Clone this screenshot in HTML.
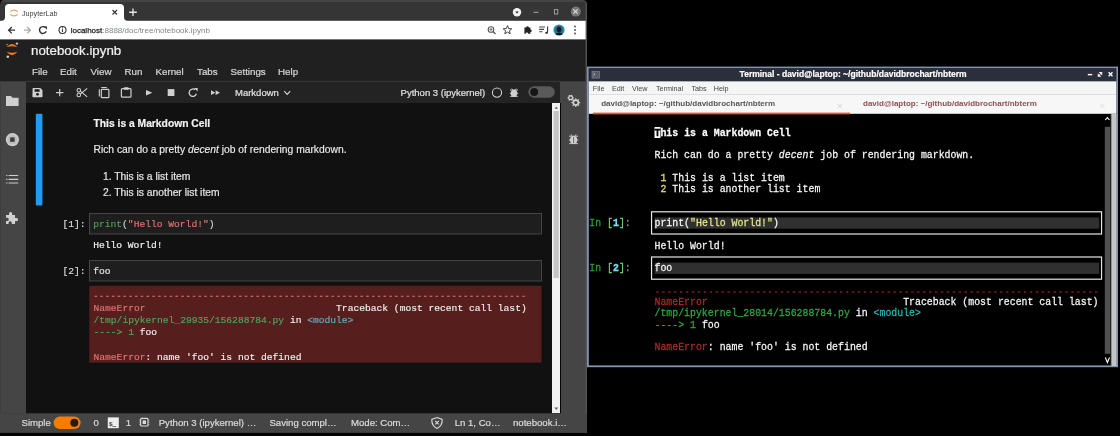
<!DOCTYPE html>
<html><head><meta charset="utf-8">
<style>
html,body{margin:0;padding:0;width:1120px;height:436px;overflow:hidden;background:#000}
svg{display:block;will-change:transform}
text{white-space:pre}
.S{font-family:"Liberation Sans",sans-serif}
.M{font-family:"Liberation Mono",monospace}
</style></head><body>
<svg width="1120" height="436" viewBox="0 0 1120 436">
<g id="browser">
<clipPath id="bwclip"><path d="M0,5 Q0,0 5,0 H582 Q587,0 587,5 V432.8 H0 Z"/></clipPath>
<g clip-path="url(#bwclip)">
<rect x="0" y="0" width="587" height="433" fill="#353535"/>
<rect x="0" y="0" width="587" height="2" fill="#454545"/>
<path d="M1,21 Q5,21 5,17 L5,8 Q5,4 9,4 L120,4 Q124,4 124,8 L124,17 Q124,21 128,21 Z" fill="#ffffff"/>
<g transform="translate(14,13)"><path d="M-3.6,-1.2 A3.8,2.4 0 0 1 3.6,-1.2" stroke="#f0a060" stroke-width="1.2" fill="none"/><path d="M-3.6,1.2 A3.8,2.4 0 0 0 3.6,1.2" stroke="#f0a060" stroke-width="1.2" fill="none"/></g>
<text class="S" x="22" y="15.8" font-size="7.2" fill="#3c4043">JupyterLab</text>
<path d="M112.5,10 L117,14.5 M117,10 L112.5,14.5" stroke="#333" stroke-width="1.1"/>
<path d="M133,8.5 V16 M129.2,12.25 H136.8" stroke="#e8e8e8" stroke-width="1.3"/>
<circle cx="517" cy="12.2" r="4.2" fill="#f2f2f2"/><path d="M515.2,11.4 L518.8,11.4 L517,13.4 Z" fill="#222"/>
<ellipse cx="536" cy="12.3" rx="6.5" ry="2.2" fill="none" stroke="#444" stroke-width="0.6"/><path d="M533.6,12.3 H538.4" stroke="#bbb" stroke-width="0.9"/>
<rect x="554.4" y="9.6" width="3.4" height="4.4" fill="none" stroke="#aaa" stroke-width="0.9"/>
<circle cx="575.8" cy="11.6" r="5" fill="#777"/><path d="M573.3,9.3 L577.7,13.7 M577.7,9.3 L573.3,13.7" stroke="#e0e0e0" stroke-width="1.1"/>
<rect x="0" y="20.8" width="587" height="18.8" fill="#ffffff"/>
<path d="M15,30.2 H8.8 M11.8,27 L8.6,30.2 L11.8,33.4" stroke="#333" stroke-width="1.3" fill="none"/>
<path d="M24,30.2 H30.2 M27.2,27 L30.4,30.2 L27.2,33.4" stroke="#aaa" stroke-width="1.3" fill="none"/>
<path d="M46.1,31.2 A3.4,3.4 0 1 1 45.3,27.6" stroke="#333" stroke-width="1.4" fill="none"/><path d="M43.9,26.6 L47,26.6 L47,29.7 Z" fill="#333"/>
<circle cx="62.5" cy="30" r="3.5" stroke="#333" stroke-width="1.1" fill="none"/><path d="M62.5,29.2 V32" stroke="#333" stroke-width="1.1"/><circle cx="62.5" cy="27.9" r="0.6" fill="#333"/>
<text class="S" x="70.7" y="32.6" font-size="8" fill="#202124"><tspan fill="#202124" stroke="#202124" stroke-width="0.25">localhost</tspan><tspan fill="#80868b">:8888/doc/tree/notebook.ipynb</tspan></text>
<circle cx="491" cy="29.5" r="2.8" stroke="#555" stroke-width="1.1" fill="none"/><path d="M493,31.5 L495.5,34" stroke="#555" stroke-width="1.2"/><path d="M491,28 V31 M489.5,29.5 H492.5" stroke="#555" stroke-width="0.8"/>
<path d="M507.5,25.6 L508.7,28.6 L511.8,28.8 L509.4,30.8 L510.2,33.8 L507.5,32.1 L504.8,33.8 L505.6,30.8 L503.2,28.8 L506.3,28.6 Z" stroke="#444" stroke-width="1" fill="none"/>
<path d="M524.4,27.6 H526.2 A1.3,1.3 0 0 1 528.8,27.6 H530.4 V29.4 A1.3,1.3 0 0 1 530.4,32 V33.8 H528.2 A1.3,1.3 0 0 0 525.6,33.8 H524.4 Z" fill="#222"/>
<path d="M539.2,27 H545 M539.2,29.4 H544 M539.2,31.8 H542.6" stroke="#444" stroke-width="1.1"/><path d="M547.6,26.4 V32.6" stroke="#333" stroke-width="1.1"/><ellipse cx="546.6" cy="32.8" rx="1.4" ry="1.1" fill="#333"/>
<circle cx="559" cy="30" r="5.6" fill="#1a93c4"/><circle cx="559" cy="30" r="4.3" fill="#2e6e88"/><ellipse cx="559" cy="29.4" rx="2.3" ry="3" fill="#1a1a1a"/><path d="M555.2,34 Q559,31.6 562.8,34 Q559,36.6 555.2,34 Z" fill="#111"/>
<circle cx="575" cy="26.5" r="0.9" fill="#444"/><circle cx="575" cy="30" r="0.9" fill="#444"/><circle cx="575" cy="33.5" r="0.9" fill="#444"/>
<rect x="0" y="39.6" width="587" height="41.9" fill="#202020"/>
<path d="M6.6,47.3 Q12,40.6 17.4,47.3 Q12,45.4 6.6,47.3 Z" fill="#f37726"/><path d="M6.6,51.8 Q12,58.6 17.4,51.8 Q12,53.8 6.6,51.8 Z" fill="#f37726"/><circle cx="16.9" cy="43.6" r="1.2" fill="#bdbdbd"/><circle cx="7" cy="44.6" r="0.8" fill="#999"/><circle cx="7.8" cy="56.8" r="1.3" fill="#cfcfcf"/>
<text class="S" x="31" y="55.3" font-size="13.3" fill="#f2f2f2" stroke="#f2f2f2" stroke-width="0.2">notebook.ipynb</text>
<text class="S" x="32" y="75.2" font-size="9.75" fill="#d8d8d8" stroke="#d8d8d8" stroke-width="0.2">File</text>
<text class="S" x="60" y="75.2" font-size="9.75" fill="#d8d8d8" stroke="#d8d8d8" stroke-width="0.2">Edit</text>
<text class="S" x="90.5" y="75.2" font-size="9.75" fill="#d8d8d8" stroke="#d8d8d8" stroke-width="0.2">View</text>
<text class="S" x="124.5" y="75.2" font-size="9.75" fill="#d8d8d8" stroke="#d8d8d8" stroke-width="0.2">Run</text>
<text class="S" x="155.5" y="75.2" font-size="9.75" fill="#d8d8d8" stroke="#d8d8d8" stroke-width="0.2">Kernel</text>
<text class="S" x="197" y="75.2" font-size="9.75" fill="#d8d8d8" stroke="#d8d8d8" stroke-width="0.2">Tabs</text>
<text class="S" x="230.5" y="75.2" font-size="9.75" fill="#d8d8d8" stroke="#d8d8d8" stroke-width="0.2">Settings</text>
<text class="S" x="278" y="75.2" font-size="9.75" fill="#d8d8d8" stroke="#d8d8d8" stroke-width="0.2">Help</text>
<rect x="0" y="81.5" width="26" height="332" fill="#454545"/>
<rect x="0" y="81.5" width="1" height="352" fill="#3e3e3e"/>
<rect x="26" y="103" width="1" height="310.5" fill="#0a0a0a"/>
<path d="M6,96 H11 L12.5,97.8 H18.6 V105.9 H6 Z" fill="#cfcfcf"/>
<circle cx="12.4" cy="139.6" r="6.6" fill="#d0d0d0"/><circle cx="12.4" cy="139.6" r="5" fill="#bdbdbd"/><rect x="10.2" y="137.4" width="4.4" height="4.4" fill="#3a3a3a"/>
<path d="M8.6,175.5 H18.2 M8.6,179.3 H18.2 M8.6,183 H18.2" stroke="#cfcfcf" stroke-width="1.2"/><path d="M6.2,175.5 H7.4 M6.2,179.3 H7.4 M6.2,183 H7.4" stroke="#cfcfcf" stroke-width="1.2"/>
<path d="M6,215 H9 V213.5 A1.6,1.6 0 0 1 12.2,213.5 V215 H15 V218 H16.5 A1.6,1.6 0 0 1 16.5,221.2 H15 V224 H11.8 V222.8 A1.6,1.6 0 0 0 8.6,222.8 V224 H6 V221 H7.2 A1.6,1.6 0 0 0 7.2,217.8 H6 Z" fill="#cfcfcf"/>
<rect x="26" y="81.5" width="534" height="21.5" fill="#232323"/>
<rect x="26" y="80.8" width="534" height="1" fill="#3a3a3a"/>
<path d="M32.6,88.6 Q32.4,88.1 33.2,88.1 H40.3 L42.5,90.3 V96.5 Q42.5,97.2 41.8,97.2 H33.2 Q32.4,97.2 32.4,96.5 Z" fill="#d0d0d0"/><rect x="34.6" y="89.2" width="5" height="2.6" fill="#212121"/><circle cx="37.5" cy="94.3" r="1.4" fill="#212121"/>
<path d="M59.7,88.9 V96.2 M56,92.55 H63.4" stroke="#d0d0d0" stroke-width="1.2"/>
<circle cx="78.8" cy="90.3" r="1.8" stroke="#d0d0d0" stroke-width="1.1" fill="none"/><circle cx="78.8" cy="95" r="1.8" stroke="#d0d0d0" stroke-width="1.1" fill="none"/><path d="M80.4,91.2 L87.2,96.8 M80.4,94.1 L87.2,88.3" stroke="#d0d0d0" stroke-width="1.1"/>
<path d="M101.2,87.5 H106.8 M99.3,89.2 V96.5" stroke="#d0d0d0" stroke-width="1.1" fill="none"/><rect x="101.3" y="89.4" width="7.6" height="8.3" rx="0.8" stroke="#d0d0d0" stroke-width="1.2" fill="none"/>
<rect x="121.4" y="88.6" width="9.6" height="8.6" rx="1" stroke="#d0d0d0" stroke-width="1.2" fill="none"/><rect x="123.8" y="87.2" width="4.8" height="2.6" rx="0.6" fill="#d0d0d0"/>
<path d="M146,89.9 L152.3,92.75 L146,95.6 Z" fill="#d0d0d0"/>
<rect x="167.7" y="89.1" width="6.7" height="6.9" fill="#d0d0d0"/>
<path d="M196.4,93.8 A3.7,3.7 0 1 1 195.2,89.8" stroke="#d0d0d0" stroke-width="1.3" fill="none"/><path d="M194.2,88 L197.6,88 L197.6,91.4 Z" fill="#d0d0d0"/>
<path d="M211,90.3 L215.3,92.7 L211,95.1 Z M215.6,90.3 L219.9,92.7 L215.6,95.1 Z" fill="#d0d0d0"/>
<text class="S" x="235" y="95.6" font-size="9.5" fill="#e0e0e0" stroke="#e0e0e0" stroke-width="0.2">Markdown</text>
<path d="M284.2,91.2 L287.2,94.3 L290.2,91.2" stroke="#d0d0d0" stroke-width="1.2" fill="none"/>
<text class="S" x="400.6" y="96" font-size="9.5" fill="#e0e0e0" stroke="#e0e0e0" stroke-width="0.2">Python 3 (ipykernel)</text>
<circle cx="497" cy="92.6" r="4.6" stroke="#d0d0d0" stroke-width="1.1" fill="none"/>
<ellipse cx="514" cy="93.3" rx="3.3" ry="3.6" fill="#d0d0d0"/><path d="M510,90 L518,90 M509.8,93.3 H518.2 M510.2,96.4 L517.8,96.4 M511.8,88.6 L512.6,89.8 M516.2,88.6 L515.4,89.8" stroke="#d0d0d0" stroke-width="0.9"/>
<rect x="528.3" y="86.2" width="26.5" height="11.6" rx="5.8" fill="#5a5a5a"/><circle cx="534.2" cy="92" r="3.9" fill="#161616"/>
<rect x="26" y="103" width="526" height="310.5" fill="#111111"/>
<rect x="552" y="103" width="8.5" height="310" fill="#f1f1f1"/>
<rect x="553.6" y="111" width="5.2" height="167" fill="#c4c4c4"/>
<path d="M554.6,108.8 L556.3,106.6 L558,108.8 Z" fill="#606060"/>
<path d="M554.3,407.5 H558.3 L556.3,410 Z" fill="#666"/>
<rect x="560" y="81.5" width="27" height="352" fill="#454545"/>
<rect x="560" y="103" width="1" height="310.5" fill="#050505"/>
<rect x="585.6" y="0" width="1.4" height="433" fill="#555555"/>
<g fill="none" stroke="#d0d0d0"><circle cx="570.6" cy="97.8" r="1.9" stroke-width="1.2"/><circle cx="575.8" cy="102.6" r="2.5" stroke-width="1.6"/></g>
<g stroke="#d0d0d0" stroke-width="1.2"><path d="M578.20,102.60 L580.20,102.60"/><path d="M577.50,104.30 L578.91,105.71"/><path d="M575.80,105.00 L575.80,107.00"/><path d="M574.10,104.30 L572.69,105.71"/><path d="M573.40,102.60 L571.40,102.60"/><path d="M574.10,100.90 L572.69,99.49"/><path d="M575.80,100.20 L575.80,98.20"/><path d="M577.50,100.90 L578.91,99.49"/><path d="M572.30,97.80 L573.70,97.80"/><path d="M571.45,99.27 L572.15,100.48"/><path d="M569.75,99.27 L569.05,100.48"/><path d="M568.90,97.80 L567.50,97.80"/><path d="M569.75,96.33 L569.05,95.12"/><path d="M571.45,96.33 L572.15,95.12"/></g>
<ellipse cx="573.6" cy="140" rx="3.6" ry="4" fill="#d0d0d0"/><path d="M569,136.2 L578.2,136.2 M568.8,140 H578.4 M569.2,143.6 L578,143.6 M571.2,134.4 L572,135.8 M576,134.4 L575.2,135.8" stroke="#d0d0d0" stroke-width="0.9"/><path d="M573.6,137 V143" stroke="#454545" stroke-width="0.7"/>
<rect x="0" y="413.5" width="587" height="20" fill="#454545"/>
<text class="S" x="21.5" y="426.4" font-size="9.6" fill="#dcdcdc" stroke="#dcdcdc" stroke-width="0.2">Simple</text>
<rect x="53.6" y="416.6" width="27" height="12.4" rx="6.2" fill="#f57c00"/><circle cx="74.3" cy="422.8" r="4" fill="#2a1a0a"/>
<text class="S" x="93.5" y="426.4" font-size="9.6" fill="#dcdcdc" stroke="#dcdcdc" stroke-width="0.2">0</text>
<rect x="107.8" y="417.4" width="11" height="10.8" fill="#eeeeee"/><text stroke="#333" stroke-width="0.15" class="M" x="109" y="425.6" font-size="6" fill="#333">$_</text>
<text class="S" x="125.8" y="426.4" font-size="9.6" fill="#dcdcdc" stroke="#dcdcdc" stroke-width="0.2">1</text>
<rect x="140.6" y="418.4" width="7.4" height="7.6" rx="1" stroke="#dcdcdc" stroke-width="1.1" fill="none"/><rect x="142.6" y="420.4" width="3.4" height="3.6" fill="#dcdcdc"/><path d="M139.2,420 H140.4 M139.2,422.2 H140.4 M139.2,424.4 H140.4 M148.2,420 H149.4 M148.2,422.2 H149.4 M148.2,424.4 H149.4" stroke="#dcdcdc" stroke-width="0.7"/>
<text class="S" x="158.7" y="426.4" font-size="9.6" fill="#dcdcdc" stroke="#dcdcdc" stroke-width="0.2">Python 3 (ipykernel) …</text>
<text class="S" x="269.4" y="426.4" font-size="9.6" fill="#dcdcdc" stroke="#dcdcdc" stroke-width="0.2">Saving compl…</text>
<text class="S" x="351" y="426.4" font-size="9.6" fill="#dcdcdc" stroke="#dcdcdc" stroke-width="0.2">Mode: Com…</text>
<path d="M437,417.6 L442.2,419.4 Q442.4,426 437,428.4 Q431.6,426 431.8,419.4 Z" stroke="#dcdcdc" stroke-width="1.1" fill="none"/><path d="M435.2,420.8 L438.8,424.4 M438.8,420.8 L435.2,424.4" stroke="#dcdcdc" stroke-width="1.1"/>
<text class="S" x="454.7" y="426.4" font-size="9.6" fill="#dcdcdc" stroke="#dcdcdc" stroke-width="0.2">Ln 1, Co…</text>
<text class="S" x="513" y="426.4" font-size="9.6" fill="#dcdcdc" stroke="#dcdcdc" stroke-width="0.2">notebook.i…</text>
<rect x="35.8" y="113.8" width="6.6" height="91.8" fill="#1f9cf2" rx="1"/>
<text class="S" x="93.5" y="126.5" font-size="10.3" fill="#f2f2f2" stroke="#f2f2f2" stroke-width="0.2" font-weight="bold">This is a Markdown Cell</text>
<text class="S" x="93.5" y="152.9" font-size="10.3" fill="#ececec" stroke="#ececec" stroke-width="0.15">Rich can do a pretty <tspan font-style="italic">decent</tspan> job of rendering markdown.</text>
<text class="S" x="103" y="179.7" font-size="10.3" fill="#e4e4e4" stroke="#e4e4e4" stroke-width="0.2">1. This is a list item</text>
<text class="S" x="103" y="195.6" font-size="10.3" fill="#e4e4e4" stroke="#e4e4e4" stroke-width="0.2">2. This is another list item</text>
<text class="M" x="62.5" y="227" font-size="9.63" fill="#d6d6d6" stroke="#d6d6d6" stroke-width="0.2">[1]:</text>
<rect x="89.5" y="213.5" width="452" height="20.5" fill="#1e1e1e" stroke="#454545" stroke-width="1"/>
<text stroke="#d4d4d4" stroke-width="0.15" class="M" x="93.2" y="227" font-size="9.63" fill="#d4d4d4"><tspan fill="#4f9f52" stroke="#4f9f52">print</tspan>(<tspan fill="#e57373" stroke="#e57373">"Hello World!"</tspan>)</text>
<text class="M" x="93.2" y="247.6" font-size="9.63" fill="#eeeeee" stroke="#eeeeee" stroke-width="0.2">Hello World!</text>
<text class="M" x="62.5" y="274.4" font-size="9.63" fill="#d6d6d6" stroke="#d6d6d6" stroke-width="0.2">[2]:</text>
<rect x="89.5" y="260.5" width="452" height="20.5" fill="#1e1e1e" stroke="#454545" stroke-width="1"/>
<text class="M" x="93.2" y="274.4" font-size="9.63" fill="#e0e0e0" stroke="#e0e0e0" stroke-width="0.2">foo</text>
<rect x="89.3" y="285.8" width="452.2" height="76.8" fill="#561f1d"/>
<path d="M94.5,296.2 H527.5" stroke="#e57373" stroke-width="1.1" stroke-dasharray="2.6 3.18"/>
<text stroke="#f0f0f0" stroke-width="0.15" class="M" x="93.5" y="311" font-size="9.63" fill="#f0f0f0"><tspan fill="#e57373" stroke="#e57373">NameError</tspan>                                 Traceback (most recent call last)</text>
<text stroke="#f0f0f0" stroke-width="0.15" class="M" x="93.5" y="323" font-size="9.63" fill="#f0f0f0"><tspan fill="#55a35c" stroke="#55a35c">/tmp/ipykernel_29935/156288784.py</tspan> in <tspan fill="#62aecb" stroke="#62aecb">&lt;module&gt;</tspan></text>
<text stroke="#f0f0f0" stroke-width="0.15" class="M" x="93.5" y="335" font-size="9.63" fill="#f0f0f0"><tspan fill="#55a35c" stroke="#55a35c">----&gt; 1</tspan> foo</text>
<text stroke="#f0f0f0" stroke-width="0.15" class="M" x="93.5" y="359.5" font-size="9.63" fill="#f0f0f0"><tspan fill="#e57373" stroke="#e57373">NameError</tspan>: name 'foo' is not defined</text>
</g>
</g>
<g id="term">
<rect x="587" y="66.6" width="531" height="300.6" fill="#8293b2"/>
<rect x="588.8" y="68.4" width="527.4" height="297" fill="#000000"/>
<rect x="588.8" y="68.4" width="527.4" height="12.9" fill="#2b2e3b"/>
<g transform="translate(592,71.4)"><rect x="0" y="0" width="7.4" height="6.7" fill="#555a66" stroke="#8a8f99" stroke-width="0.6"/><path d="M1.4,1.8 L3,3 L1.4,4.2" stroke="#ddd" stroke-width="0.7" fill="none"/></g>
<text class="S" x="739.6" y="77.2" font-size="8.5" fill="#ffffff" stroke="#ffffff" stroke-width="0.2" font-weight="bold">Terminal - david@laptop: ~/github/davidbrochart/nbterm</text>
<path d="M1087.8,74.6 H1092.2" stroke="#fff" stroke-width="1.4"/>
<path d="M1098.6,72 L1102.2,72 L1102.2,75.6 Z M1101.4,76.8 L1097.8,76.8 L1097.8,73.2 Z" fill="#f0f0f0"/><path d="M1098.2,76.4 L1101.8,72.4" stroke="#f0f0f0" stroke-width="0.9"/>
<path d="M1108.6,72.3 L1112.5,76.2 M1112.5,72.3 L1108.6,76.2" stroke="#fff" stroke-width="1.4"/>
<rect x="588.8" y="81.3" width="527.4" height="12.9" fill="#f5f5f5"/>
<text class="S" x="592.8" y="90.6" font-size="7.2" fill="#444">File</text>
<text class="S" x="611.9" y="90.6" font-size="7.2" fill="#444">Edit</text>
<text class="S" x="632" y="90.6" font-size="7.2" fill="#444">View</text>
<text class="S" x="656" y="90.6" font-size="7.2" fill="#444">Terminal</text>
<text class="S" x="691.4" y="90.6" font-size="7.2" fill="#444">Tabs</text>
<text class="S" x="713.7" y="90.6" font-size="7.2" fill="#444">Help</text>
<rect x="588.8" y="94.2" width="527.4" height="19.6" fill="#f7f7f7"/>
<rect x="588.8" y="94.2" width="527.4" height="0.8" fill="#e2e2e2"/>
<text class="S" x="601.2" y="106.2" font-size="8" fill="#555555" font-weight="bold">david@laptop: ~/github/davidbrochart/nbterm</text>
<path d="M837.5,103.8 L842,108.3 M842,103.8 L837.5,108.3" stroke="#cfcfcf" stroke-width="0.9"/>
<text class="S" x="863" y="106.2" font-size="8" fill="#8e5050" font-weight="bold">david@laptop: ~/github/davidbrochart/nbterm</text>
<path d="M1100,103.8 L1104.5,108.3 M1104.5,103.8 L1100,108.3" stroke="#e0e0e0" stroke-width="0.9"/>
<rect x="593" y="112.6" width="257" height="1.8" fill="#e05a2a"/>
<rect x="1110.9" y="114" width="5.6" height="252" fill="#c4c4c4"/>
<rect x="1110.9" y="114" width="1" height="252" fill="#8a8a8a"/>
<rect x="1104.8" y="126.8" width="5.4" height="227" fill="#505050"/>
<path d="M1105.3,120 L1107.4,117.6 L1109.5,120" stroke="#fff" stroke-width="1.1" fill="none"/>
<path d="M1105.3,357.5 L1107.4,362.5 L1109.5,357.5" stroke="#fff" stroke-width="1.1" fill="none"/>
<rect x="654.519" y="127.0" width="5.929" height="11" fill="#ffffff"/>
<text class="M" x="654.52" y="135.60" font-size="9.88" fill="#ffffff" stroke="#ffffff" stroke-width="0.22" font-weight="bold" transform="matrix(1,0,0,1.14,0,-18.984)"><tspan fill="#000" stroke="#000">T</tspan>his is a Markdown Cell</text>
<text class="M" x="654.52" y="158.20" font-size="9.88" fill="#f8f8f8" stroke="#f8f8f8" stroke-width="0.22" transform="matrix(1,0,0,1.14,0,-22.148)">Rich can do a pretty <tspan font-style="italic">decent</tspan> job of rendering markdown.</text>
<text class="M" x="660.45" y="180.80" font-size="9.88" fill="#f8f8f8" stroke="#f8f8f8" stroke-width="0.22" transform="matrix(1,0,0,1.14,0,-25.312)"><tspan fill="#e6e67a" stroke="#e6e67a">1</tspan> This is a list item</text>
<text class="M" x="660.45" y="192.10" font-size="9.88" fill="#f8f8f8" stroke="#f8f8f8" stroke-width="0.22" transform="matrix(1,0,0,1.14,0,-26.894)"><tspan fill="#e6e67a" stroke="#e6e67a">2</tspan> This is another list item</text>
<rect x="654.519" y="217.4" width="444.675" height="11.3" fill="#303030"/>
<rect x="651.55" y="211.80" width="450.01" height="22.20" fill="none" stroke="#e6e6e6" stroke-width="1.2"/>
<rect x="654.519" y="262.6" width="444.675" height="11.3" fill="#303030"/>
<rect x="651.55" y="257.00" width="450.01" height="22.20" fill="none" stroke="#e6e6e6" stroke-width="1.2"/>
<text class="M" x="589.30" y="226.00" font-size="9.88" fill="#f8f8f8" stroke="#f8f8f8" stroke-width="0.22" transform="matrix(1,0,0,1.14,0,-31.640)"><tspan fill="#2e9e3e" stroke="#2e9e3e">In </tspan><tspan fill="#6fdc6f" stroke="#6fdc6f">[</tspan><tspan fill="#7fe0e0" stroke="#7fe0e0" font-weight="bold">1</tspan><tspan fill="#6fdc6f" stroke="#6fdc6f">]</tspan><tspan fill="#888" stroke="#888">:</tspan></text>
<text class="M" x="654.52" y="226.00" font-size="9.88" fill="#f8f8f8" stroke="#f8f8f8" stroke-width="0.22" transform="matrix(1,0,0,1.14,0,-31.640)">print(<tspan fill="#e6e68a" stroke="#e6e68a">"Hello World!"</tspan>)</text>
<text class="M" x="654.52" y="248.60" font-size="9.88" fill="#f8f8f8" stroke="#f8f8f8" stroke-width="0.22" transform="matrix(1,0,0,1.14,0,-34.804)">Hello World!</text>
<text class="M" x="589.30" y="271.20" font-size="9.88" fill="#f8f8f8" stroke="#f8f8f8" stroke-width="0.22" transform="matrix(1,0,0,1.14,0,-37.968)"><tspan fill="#2e9e3e" stroke="#2e9e3e">In </tspan><tspan fill="#6fdc6f" stroke="#6fdc6f">[</tspan><tspan fill="#7fe0e0" stroke="#7fe0e0" font-weight="bold">2</tspan><tspan fill="#6fdc6f" stroke="#6fdc6f">]</tspan><tspan fill="#888" stroke="#888">:</tspan></text>
<text class="M" x="654.52" y="271.20" font-size="9.88" fill="#f8f8f8" stroke="#f8f8f8" stroke-width="0.22" transform="matrix(1,0,0,1.14,0,-37.968)">foo</text>
<path d="M656.22,292.00 H1099.19" stroke="#b02a2a" stroke-width="1.1" stroke-dasharray="2.5 3.429"/>
<text class="M" x="654.52" y="305.10" font-size="9.88" fill="#f8f8f8" stroke="#f8f8f8" stroke-width="0.22" transform="matrix(1,0,0,1.14,0,-42.714)"><tspan fill="#b02a2a" stroke="#b02a2a">NameError</tspan>                                 Traceback (most recent call last)</text>
<text class="M" x="654.52" y="316.40" font-size="9.88" fill="#f8f8f8" stroke="#f8f8f8" stroke-width="0.22" transform="matrix(1,0,0,1.14,0,-44.296)"><tspan fill="#2eaa3e" stroke="#2eaa3e">/tmp/ipykernel_28014/156288784.py</tspan> in <tspan fill="#26b8b8" stroke="#26b8b8">&lt;module&gt;</tspan></text>
<text class="M" x="654.52" y="327.70" font-size="9.88" fill="#f8f8f8" stroke="#f8f8f8" stroke-width="0.22" transform="matrix(1,0,0,1.14,0,-45.878)"><tspan fill="#2eaa3e" stroke="#2eaa3e">----&gt; 1</tspan> foo</text>
<text class="M" x="654.52" y="350.30" font-size="9.88" fill="#f8f8f8" stroke="#f8f8f8" stroke-width="0.22" transform="matrix(1,0,0,1.14,0,-49.042)"><tspan fill="#b02a2a" stroke="#b02a2a">NameError</tspan>: name 'foo' is not defined</text>
</g>
</svg>
</body></html>
